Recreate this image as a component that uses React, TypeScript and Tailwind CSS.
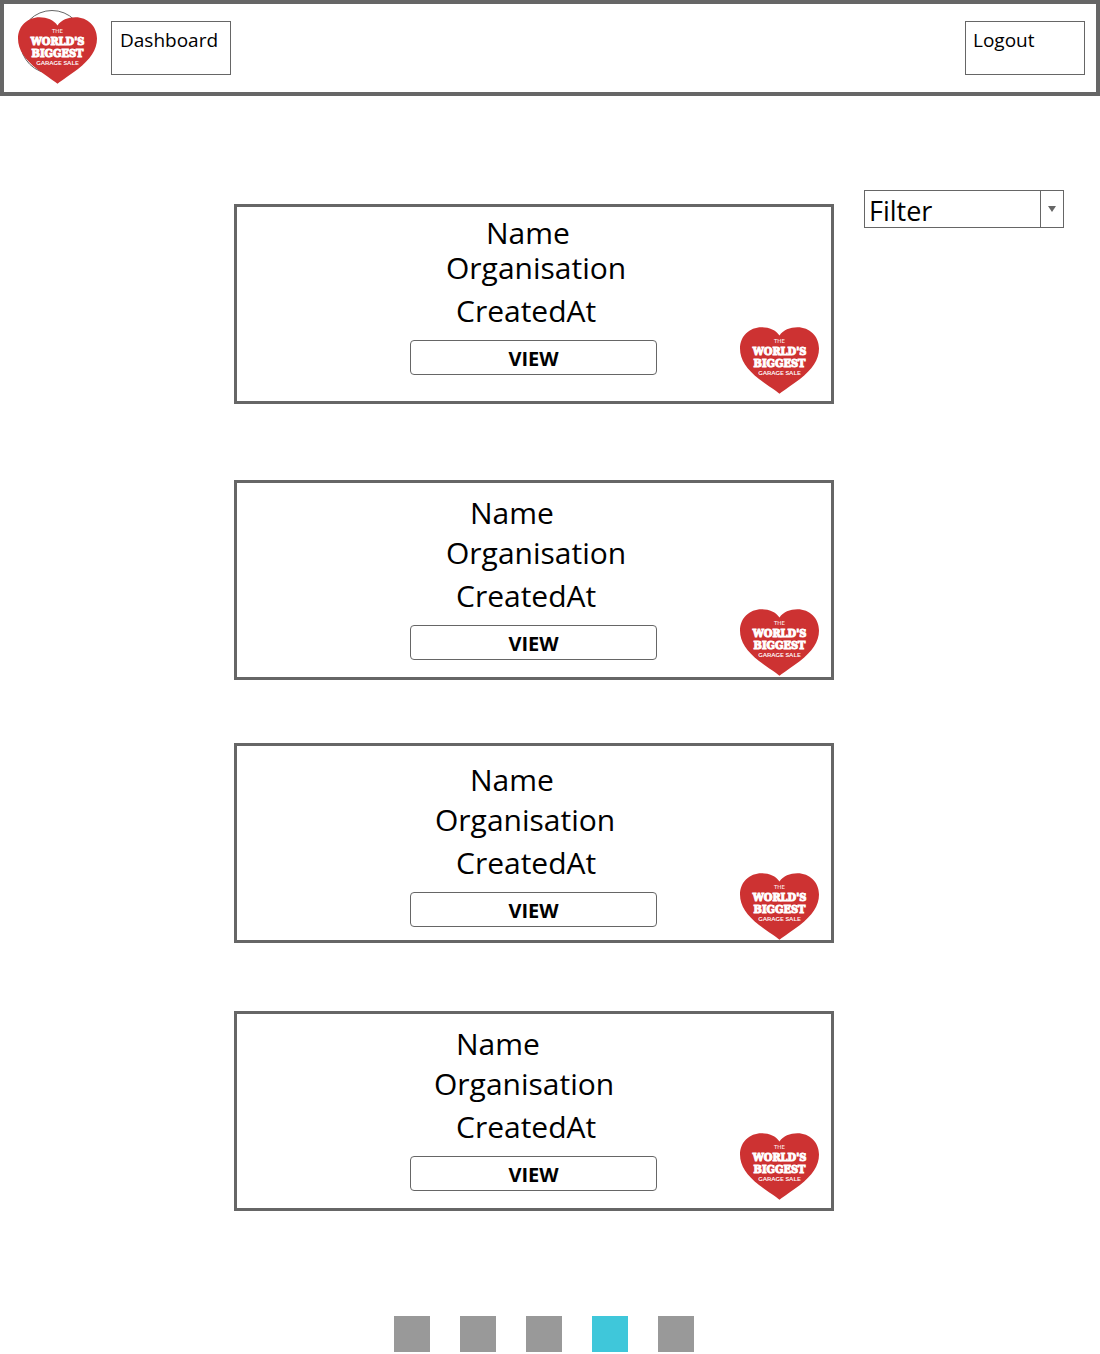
import React from "react";

function HeartLogo() {
  return (
    <svg viewBox="0 0 79 68" className="block h-[68px] w-[79px] shrink-0" role="img" aria-label="The World's Biggest Garage Sale">
      <path
        d="M39.5 67.8C35 64 26 58.500 19 53C7 43.500 0 34 0 22.500C0 10 9.500 1.200 21.500 1.200C29 1.200 36 4 39.500 9.500C43 4 50 1.200 57.500 1.200C69.500 1.200 79 10 79 22.500C79 34 72 43.500 60 53C53 58.500 44 64 39.500 67.800Z"
        fill="#cd3232"
      />
      <g fill="#fff" textAnchor="middle">
        <text x="39.5" y="16.500" fontSize="5.500" fontFamily="'DejaVu Sans', sans-serif">THE</text>
        <g fontFamily="'DejaVu Serif Condensed', 'DejaVu Serif', serif" fontWeight="700" stroke="#fff" strokeWidth="1">
          <text x="39.5" y="29" fontSize="11">WORLD'S</text>
          <text x="39.5" y="41" fontSize="11">BIGGEST</text>
        </g>
        <text x="39.5" y="49" fontSize="5.800" fontWeight="600" fontFamily="Montserrat, 'Open Sans', sans-serif">GARAGE SALE</text>
      </g>
    </svg>
  );
}

const cards = [
  { card: "mb-[76px] pt-[11px]", name: "ml-[76px] leading-[30px]", organisation: "ml-[36px]", logo: "mb-[7px]" },
  { card: "mb-[63px] pt-[10px]", name: "ml-[60px] leading-[40px]", organisation: "ml-[36px]", logo: "mb-px" },
  { card: "mb-[68px] pt-[14px]", name: "ml-[60px] leading-[40px]", organisation: "ml-[25px]", logo: "" },
  { card: "pt-[10px]", name: "ml-[46px] leading-[40px]", organisation: "ml-[24px]", logo: "mb-2" },
];

const pages = [1, 2, 3, 4, 5];

export default function App() {
  return (
    <div className="min-h-screen bg-white font-['Open_Sans','Noto_Sans',sans-serif] text-black">
      <header className="flex h-24 items-center border-4 border-[#666] pr-[11px] pl-[14px]">
        <div className="relative pt-1">
          <span className="absolute -top-0.5 left-0.5 size-16 rounded-full border border-[#666]" />
          <div className="relative">
            <HeartLogo />
          </div>
        </div>
        <a href="#dashboard" className="ml-[14px] h-[54px] w-[120px] border border-[#666] pt-1 pl-2 text-[19px] leading-7">
          Dashboard
        </a>
        <button type="button" className="ml-auto h-[54px] w-[120px] border border-[#666] pb-4 pl-[7px] text-left text-[19px] leading-7">
          Logout
        </button>
      </header>

      <main>
        <div className="flex items-start justify-end gap-[30px] pt-[94px] pr-9 pl-6">
          <section className="max-w-[600px] flex-1 pt-[14px]">
            {cards.map((c, i) => (
              <article key={i} className={`flex h-[200px] justify-between border-[3px] border-[#666] pr-3 pl-[173px] ${c.card}`}>
                <div className="flex w-[247px] flex-col items-start text-[30px]">
                  <h2 className={c.name}>Name</h2>
                  <p className={`leading-[40px] ${c.organisation}`}>Organisation</p>
                  <p className="mb-1.5 ml-[46px] leading-[46px]">CreatedAt</p>
                  <button type="button" className="h-[35px] w-full shrink-0 rounded border border-[#666] pt-[3px] text-[20px] leading-7 font-bold">
                    VIEW
                  </button>
                </div>
                <div className={`self-end ${c.logo}`}>
                  <HeartLogo />
                </div>
              </article>
            ))}
          </section>

          <div className="relative w-[200px]">
            <select aria-label="Filter" className="block h-[38px] w-full appearance-none border border-[#666] bg-white pt-[3px] pl-1 text-[27px] leading-8">
              <option>Filter</option>
            </select>
            <span className="pointer-events-none absolute inset-y-0 right-0 flex w-6 items-center justify-center border border-[#666]">
              <svg viewBox="0 0 8 6" className="h-1.5 w-2" aria-hidden="true">
                <path d="M0 0H8L4 6Z" fill="#666" />
              </svg>
            </span>
          </div>
        </div>

        <nav aria-label="Pagination" className="mt-[105px] flex justify-center gap-[30px] pr-3 pb-0.5">
          {pages.map((page) => (
            <button
              key={page}
              type="button"
              aria-label={`Page ${page}`}
              className={`size-9 ${page === 4 ? "bg-[#3fc7da]" : "bg-[#999]"}`}
            />
          ))}
        </nav>
      </main>
    </div>
  );
}
